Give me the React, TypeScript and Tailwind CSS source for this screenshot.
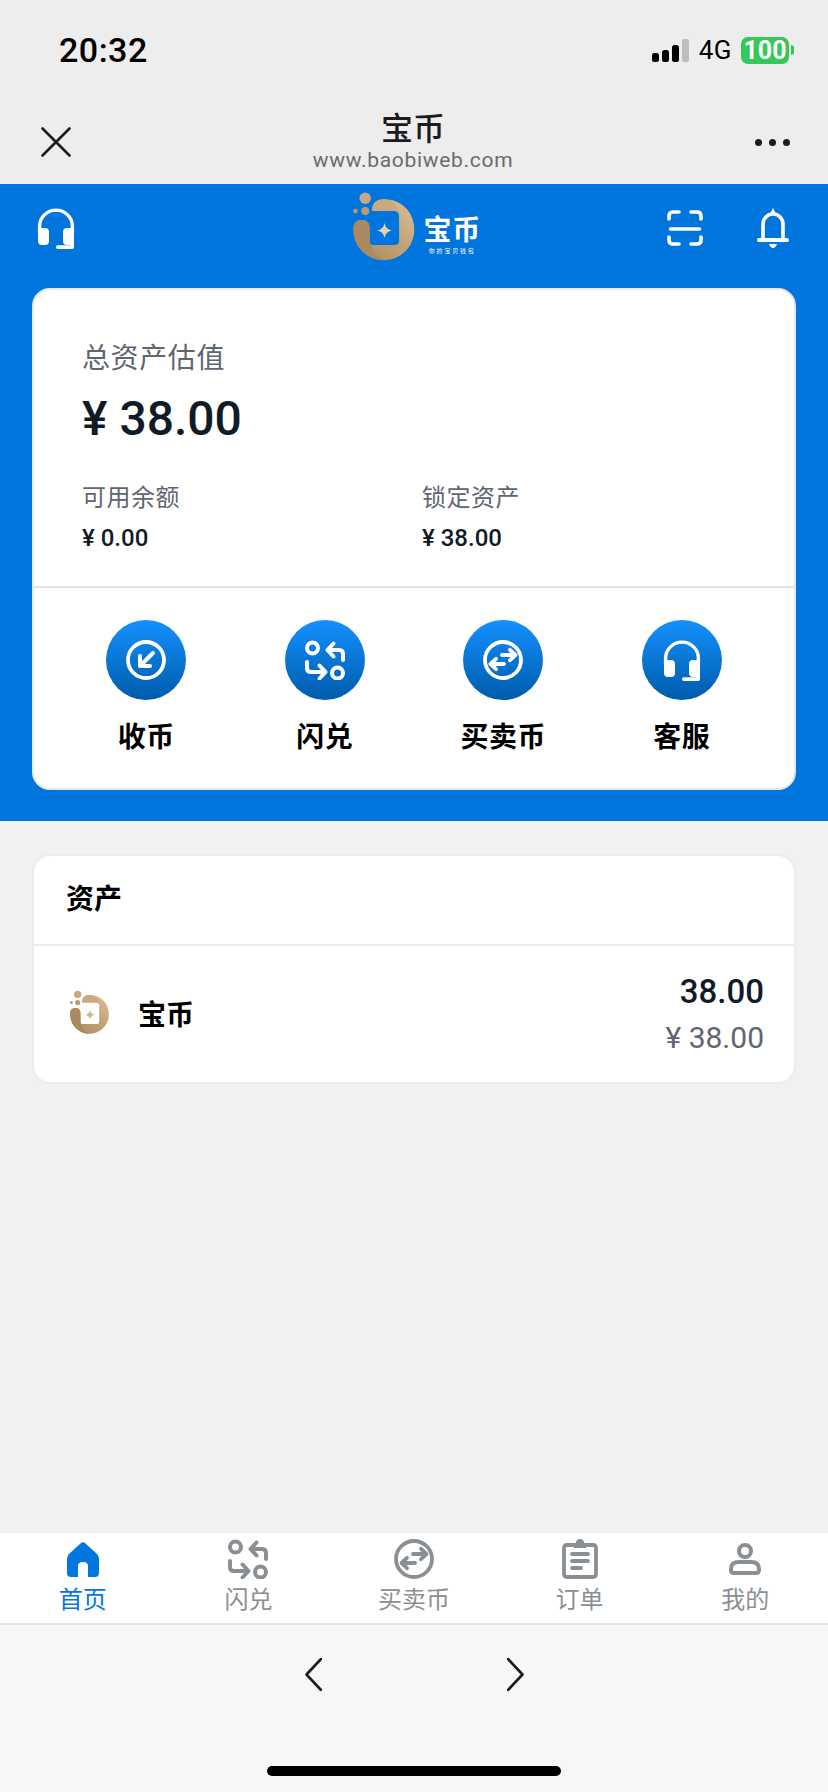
import React from "react";

const sans = "font-['Roboto','Noto_Sans_CJK_SC',sans-serif]";

function Logo({ className, star = "#d8b98e" }: { className: string; star?: string }) {
  const id = React.useId();
  return (
    <svg viewBox="60 28 195 212" className={className}>
      <defs>
        <linearGradient id={id} x1="0" y1="1" x2="1" y2="0">
          <stop offset="0" stopColor="#a8875c" />
          <stop offset="0.55" stopColor="#c3a377" />
          <stop offset="1" stopColor="#dcc29b" />
        </linearGradient>
      </defs>
      <circle cx="105" cy="52" r="17" fill="#c8a883" />
      <circle cx="105" cy="90" r="12" fill="#bb9a72" />
      <circle cx="76" cy="90" r="7" fill="#bb9a72" />
      <path
        fill={`url(#${id})`}
        d="M125 88C125 66 140 55 160 55C215 55 250 95 250 145C250 195 210 235 160 235C110 235 70 195 70 145L70 140C70 125 80 116 95 116C110 116 118 125 118 140L118 178Q118 190 130 190L193 190Q205 190 205 178L205 105Q205 90 190 90L125 90Z"
      />
      <path fill="#a98a60" d="M70 145C70 195 110 235 160 235C140 225 122 210 118 178L118 140C118 125 110 116 95 116C80 116 70 125 70 140Z" />
      <path fill="#caa97f" d="M125 88C125 66 140 55 160 55C190 55 203 80 205 105Q205 90 190 90L125 90Z" />
      <path fill={star} d="M162 125Q165 143 183 147Q165 151 162 169Q159 151 141 147Q159 143 162 125Z" />
    </svg>
  );
}

function Headset({ className }: { className: string }) {
  return (
    <svg viewBox="0 0 38 41" fill="none" className={className}>
      <path d="M2.6 24V18.5a16.4 16.4 0 0 1 32.8 0V24" stroke="#fff" strokeWidth="3.4" />
      <rect x="1" y="20" width="11" height="17" rx="4" fill="#fff" />
      <rect x="26" y="20" width="11" height="17" rx="4" fill="#fff" />
      <path d="M35.4 34V39" stroke="#fff" strokeWidth="3.2" />
      <rect x="19" y="37.2" width="18" height="3.8" rx="1.8" fill="#fff" />
    </svg>
  );
}

function Swap({ className, color = "#fff" }: { className: string; color?: string }) {
  return (
    <svg viewBox="0 0 40 40" fill="none" stroke={color} strokeWidth="4" strokeLinecap="round" strokeLinejoin="round" className={className}>
      <circle cx="7.5" cy="8" r="5.5" />
      <circle cx="32.5" cy="33" r="5.5" />
      <path d="M28.5 3.5L22.5 10L28.5 16.5M22.5 10H34Q38 10 38 14V20" />
      <path d="M14.5 25.5L20.5 32L14.5 38.5M20.5 32H6Q2 32 2 28V22" />
    </svg>
  );
}

function Trade({ className, color = "#fff" }: { className: string; color?: string }) {
  return (
    <svg viewBox="0 0 40 40" fill="none" stroke={color} strokeLinecap="round" strokeLinejoin="round" className={className}>
      <circle cx="20" cy="20" r="18" strokeWidth="3.8" />
      <path strokeWidth="3.8" d="M19 15H32.5M27 9.8L32.5 15L27 20.2M21 24H7.5M13 18.8L7.5 24L13 29.2" />
    </svg>
  );
}

function Receive({ className }: { className: string }) {
  return (
    <svg viewBox="0 0 40 40" fill="none" stroke="#fff" strokeLinecap="round" strokeLinejoin="round" className={className}>
      <circle cx="20" cy="20" r="18" strokeWidth="3.8" />
      <path strokeWidth="4" d="M27 13L14 26M14 16V26H24" />
    </svg>
  );
}

function Action({ icon, label }: { icon: React.ReactNode; label: string }) {
  return (
    <div className="flex flex-col items-center">
      <div className="flex h-20 w-20 items-center justify-center rounded-full bg-gradient-to-b from-[#1590ff] to-[#005cab]">{icon}</div>
      <div className="mt-[18px] text-[28px] leading-[40px] font-semibold tracking-[0.5px] text-black">{label}</div>
    </div>
  );
}

function Tab({ icon, label, active }: { icon: React.ReactNode; label: string; active?: boolean }) {
  return (
    <div className="flex flex-col items-center">
      <div className="flex h-[44px] items-center justify-center">{icon}</div>
      <div className={`mt-[2px] text-[24px] leading-[34px] ${active ? "text-[#0076de]" : "text-[#8c8f92]"}`}>{label}</div>
    </div>
  );
}

export default function App() {
  return (
    <div className={`${sans} flex h-[1792px] w-[828px] flex-col overflow-hidden bg-[#f1f1f2]`}>
      {/* status bar */}
      <div className="flex h-[100px] items-center justify-between bg-[#ededed] pr-[34px] pl-[59px]">
        <div className="text-[34px] leading-none font-medium tracking-[0.5px] text-black">20:32</div>
        <div className="flex items-center">
          <svg viewBox="0 0 37 23" className="h-[23px] w-[37px]">
            <rect x="0" y="14" width="7" height="9" rx="2.5" fill="#000" />
            <rect x="10" y="11" width="7" height="12" rx="2.5" fill="#000" />
            <rect x="20" y="6" width="7" height="17" rx="2.5" fill="#000" />
            <rect x="30" y="0" width="7" height="23" rx="2" fill="#bdbdbd" />
          </svg>
          <div className="ml-[10px] text-[26px] leading-none tracking-[0.5px] text-black">4G</div>
          <div className="ml-[9px] flex h-[27px] w-[48px] items-center justify-center rounded-[7px] bg-[#34c759] text-[25px] leading-none font-bold text-white">100</div>
          <div className="ml-[2px] h-[10px] w-[3px] rounded-r-[3px] bg-[#34c759]" />
        </div>
      </div>
      {/* title bar */}
      <div className="flex h-[84px] items-center justify-between bg-[#ededed] pr-[38px] pl-[41px]">
        <svg viewBox="0 0 30 30" className="h-[30px] w-[30px]" fill="none" stroke="#1c1c1c" strokeWidth="2.6" strokeLinecap="round">
          <path d="M1.5 1.5L28.5 28.5M28.5 1.5L1.5 28.5" />
        </svg>
        <div className="flex flex-col items-center pb-[4px]">
          <div className="text-[32px] leading-[42px] font-medium text-[#1c1c1c]">宝币</div>
          <div className="-mt-[1px] text-[21px] leading-[23px] tracking-[0.7px] text-[#6b6b6b]">www.baobiweb.com</div>
        </div>
        <div className="flex w-[35px] justify-between">
          <span className="h-[7px] w-[7px] rounded-full bg-[#1c1c1c]" />
          <span className="h-[7px] w-[7px] rounded-full bg-[#1c1c1c]" />
          <span className="h-[7px] w-[7px] rounded-full bg-[#1c1c1c]" />
        </div>
      </div>
      {/* blue section */}
      <div className="h-[637px] bg-[#0075de] px-[32px]">
        <div className="flex h-[104px] items-start pt-[6px] pl-[5px]">
          <div className="pt-[18px]">
            <Headset className="h-[41px] w-[38px]" />
          </div>
          <div className="ml-[275px] flex items-center">
            <Logo className="h-[72px] w-[66px]" star="#e8d3ae" />
            <div className="ml-[5px] flex flex-col items-center pt-[20px] text-white">
              <div className="text-[28px] leading-[30px] font-bold tracking-[0.6px]">宝币</div>
              <div className="origin-center scale-75 text-[8px] leading-[10px] tracking-[2.4px] whitespace-nowrap">你的宝贝钱包</div>
            </div>
          </div>
          <div className="ml-auto flex items-start gap-[54px] pt-[20px] pr-[7px]">
            <svg viewBox="0 0 36 36" fill="none" stroke="#fff" strokeWidth="3.6" strokeLinecap="round" className="h-[36px] w-[36px]">
              <path d="M2 9V6Q2 2 6 2H12M24 2H30Q34 2 34 6V9M2 27V30Q2 34 6 34H12M24 34H30Q34 34 34 30V27" />
              <path d="M3.5 19H32.5" />
            </svg>
            <svg viewBox="0 0 32 40" className="-mt-[2px] h-[40px] w-[32px]" fill="none">
              <path d="M13 6L16 0L19 6Z" fill="#fff" />
              <path d="M6 32V16a10 10 0 0 1 20 0V32" stroke="#fff" strokeWidth="3.6" />
              <rect x="0" y="30" width="32" height="4" rx="2" fill="#fff" />
              <path d="M12 36H20Q18.5 40 16 40Q13.5 40 12 36Z" fill="#fff" />
            </svg>
          </div>
        </div>
        <div className="h-[502px] rounded-[18px] border-2 border-[#e6e8ea] bg-white">
          <div className="h-[298px] border-b-2 border-[#e4e4e4] pt-[49px] pl-[48px]">
            <div className="text-[28px] leading-[40px] tracking-[0.6px] text-[#5f6670]">总资产估值</div>
            <div className="mt-[10px] text-[48px] leading-[60px] font-medium text-[#111b27]">¥ 38.00</div>
            <div className="mt-[32px] flex">
              <div className="w-[340px]">
                <div className="text-[24px] leading-[34px] tracking-[0.5px] text-[#5f6670]">可用余额</div>
                <div className="mt-[6px] text-[24px] leading-[34px] font-medium text-[#111b27]">¥ 0.00</div>
              </div>
              <div>
                <div className="text-[24px] leading-[34px] tracking-[0.5px] text-[#5f6670]">锁定资产</div>
                <div className="mt-[6px] text-[24px] leading-[34px] font-medium text-[#111b27]">¥ 38.00</div>
              </div>
            </div>
          </div>
          <div className="grid grid-cols-4 pt-[32px] pr-[23px] pl-[23px]">
            <Action label="收币" icon={<Receive className="h-[40px] w-[40px]" />} />
            <Action label="闪兑" icon={<Swap className="h-[40px] w-[40px]" />} />
            <Action label="买卖币" icon={<Trade className="h-[40px] w-[40px]" />} />
            <Action label="客服" icon={<Headset className="h-[41px] w-[38px]" />} />
          </div>
        </div>
      </div>
      {/* assets */}
      <div className="flex-1 px-[32px] pt-[33px]">
        <div className="h-[230px] rounded-[18px] border-2 border-[#ececec] bg-white">
          <div className="flex h-[90px] items-center border-b-2 border-[#ececec] pl-[32px] text-[28px] font-semibold text-black">资产</div>
          <div className="flex h-[136px] items-center justify-between pr-[30px] pl-[34px]">
            <div className="flex items-center">
              <Logo className="-mt-[4px] h-[46px] w-[42px]" />
              <div className="ml-[28px] pt-[4px] text-[28px] font-semibold text-black">宝币</div>
            </div>
            <div className="flex flex-col items-end pt-[2px]">
              <div className="text-[33px] leading-[46px] font-medium text-[#111b27]">38.00</div>
              <div className="text-[30px] leading-[46px] text-[#5f6670]">¥ 38.00</div>
            </div>
          </div>
        </div>
      </div>
      {/* tabs */}
      <div className="grid h-[94px] grid-cols-5 border-t-2 border-b-2 border-t-[#ececec] border-b-[#e4e4e4] bg-white pt-[4px]">
        <Tab
          active
          label="首页"
          icon={
            <svg viewBox="0 0 32 35" className="h-[35px] w-[32px]">
              <path fill="#0076de" d="M14 1Q16 -0.5 18 1L30 12Q32 14 32 17V31Q32 35 28 35H21V24Q21 20 16 20Q11 20 11 24V35H4Q0 35 0 31V17Q0 14 2 12Z" />
            </svg>
          }
        />
        <Tab label="闪兑" icon={<Swap className="h-[40px] w-[40px]" color="#8a8f94" />} />
        <Tab label="买卖币" icon={<Trade className="h-[40px] w-[40px]" color="#8a8f94" />} />
        <Tab
          label="订单"
          icon={
            <svg viewBox="0 0 36 40" fill="none" className="h-[40px] w-[36px]">
              <rect x="2" y="6" width="32" height="32" rx="2.5" stroke="#8a8f94" strokeWidth="3.8" />
              <circle cx="18" cy="4" r="4" fill="#8a8f94" />
              <rect x="12" y="4" width="12" height="5" fill="#8a8f94" />
              <path d="M10 15H26M10 22H26M10 29H19" stroke="#8a8f94" strokeWidth="3.8" strokeLinecap="round" />
            </svg>
          }
        />
        <Tab
          label="我的"
          icon={
            <svg viewBox="0 0 32 32" fill="none" stroke="#8a8f94" strokeWidth="4" className="h-[32px] w-[32px]">
              <circle cx="16" cy="8" r="6" />
              <path d="M2 27V26Q2 19 10 19H22Q30 19 30 26V27Q30 30 27 30H5Q2 30 2 27Z" />
            </svg>
          }
        />
      </div>
      {/* browser bar */}
      <div className="flex h-[167px] flex-col items-center bg-[#f7f7f7]">
        <div className="mt-[33px] flex gap-[185px]">
          <svg viewBox="0 0 17 33" fill="none" stroke="#1c1c1c" strokeWidth="2.6" strokeLinecap="round" strokeLinejoin="round" className="h-[33px] w-[17px]">
            <path d="M16 1L1.5 16.5L16 32" />
          </svg>
          <svg viewBox="0 0 17 33" fill="none" stroke="#1c1c1c" strokeWidth="2.6" strokeLinecap="round" strokeLinejoin="round" className="h-[33px] w-[17px]">
            <path d="M1 1L15.5 16.5L1 32" />
          </svg>
        </div>
        <div className="mt-[75px] h-[10px] w-[294px] rounded-full bg-black" />
      </div>
    </div>
  );
}
